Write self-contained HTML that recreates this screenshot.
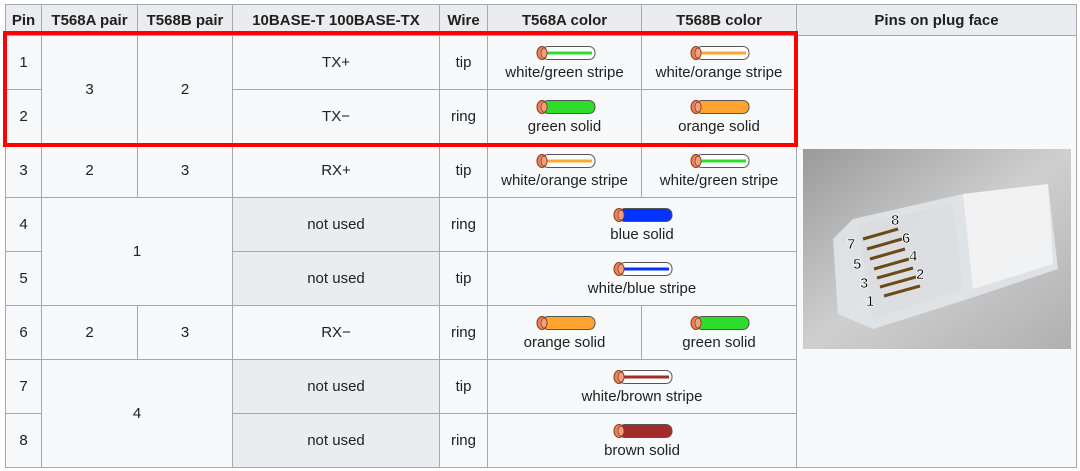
<!DOCTYPE html>
<html><head><meta charset="utf-8"><style>
body{margin:0;background:#fff;width:1080px;height:471px;overflow:hidden;font-family:"Liberation Sans","DejaVu Sans",sans-serif;font-size:15px;color:#202122}
table{position:absolute;left:5px;top:4px;border-collapse:collapse;table-layout:fixed;background:#f8f9fa}
td,th{border:1px solid #a2a9b1;text-align:center;padding:0;vertical-align:middle}
th{background:#eaecf0;height:30px;font-weight:bold}
td{height:53px}
.nu{background:#eaecf0}
.w{display:block;margin:0 auto 3px}
.box{position:absolute;left:3px;top:31px;width:787px;height:108px;border:4px solid #f00}
</style></head><body>
<svg width="0" height="0" style="position:absolute"><defs>
<g id="end"><ellipse cx="8" cy="8" rx="5" ry="6.5" fill="#e8845c" stroke="#8a3a1a"/><ellipse cx="10" cy="8" rx="3" ry="5" fill="#f0a080" stroke="#8a3a1a" stroke-width=".7"/></g>
</defs></svg>
<table>
<colgroup><col style="width:36px"><col style="width:96px"><col style="width:95px"><col style="width:207px"><col style="width:48px"><col style="width:154px"><col style="width:155px"><col style="width:280px"></colgroup>
<tr><th>Pin</th><th>T568A pair</th><th>T568B pair</th><th>10BASE-T 100BASE-TX</th><th>Wire</th><th>T568A color</th><th>T568B color</th><th>Pins on plug face</th></tr>
<tr><td>1</td><td rowspan="2">3</td><td rowspan="2">2</td><td>TX+</td><td>tip</td>
<td><svg class="w" width="62" height="16"><rect x="8" y="1.5" width="53" height="13" rx="6" fill="#fff" stroke="#555"/><rect x="12" y="6.5" width="46" height="3" fill="#2ddc2d"/><use href="#end"/></svg>white/green stripe</td>
<td><svg class="w" width="62" height="16"><rect x="8" y="1.5" width="53" height="13" rx="6" fill="#fff" stroke="#555"/><rect x="12" y="6.5" width="46" height="3" fill="#ffa530"/><use href="#end"/></svg>white/orange stripe</td>
<td rowspan="2" style="border-bottom:none"></td></tr>
<tr><td>2</td><td>TX−</td><td>ring</td>
<td><svg class="w" width="62" height="16"><rect x="8" y="1.5" width="53" height="13" rx="6" fill="#2ddc2d" stroke="#555"/><use href="#end"/></svg>green solid</td>
<td><svg class="w" width="62" height="16"><rect x="8" y="1.5" width="53" height="13" rx="6" fill="#ffa530" stroke="#555"/><use href="#end"/></svg>orange solid</td></tr>
<tr><td>3</td><td>2</td><td>3</td><td>RX+</td><td>tip</td>
<td><svg class="w" width="62" height="16"><rect x="8" y="1.5" width="53" height="13" rx="6" fill="#fff" stroke="#555"/><rect x="12" y="6.5" width="46" height="3" fill="#ffa530"/><use href="#end"/></svg>white/orange stripe</td>
<td><svg class="w" width="62" height="16"><rect x="8" y="1.5" width="53" height="13" rx="6" fill="#fff" stroke="#555"/><rect x="12" y="6.5" width="46" height="3" fill="#2ddc2d"/><use href="#end"/></svg>white/green stripe</td>
<td rowspan="6" style="border-top:none;vertical-align:top"><svg width="268" height="200" style="display:block;margin:5px auto 0">
<defs><linearGradient id="bg" x1="0" y1="0" x2="1" y2="1"><stop offset="0" stop-color="#9a9a9a"/><stop offset=".5" stop-color="#cfcfcf"/><stop offset="1" stop-color="#b0b0b0"/></linearGradient></defs>
<rect width="268" height="200" fill="url(#bg)"/>
<path d="M30 90 L50 70 L160 45 L245 35 L255 120 L165 150 L70 180 L35 165 Z" fill="#e2e5e8" opacity=".9"/>
<path d="M160 45 L245 35 L250 115 L170 140 Z" fill="#f4f5f6" opacity=".85"/>
<path d="M55 75 L150 55 L160 140 L70 170 Z" fill="#d8dbde" opacity=".6"/>
<g stroke="#6b4a18" stroke-width="3"><line x1="60" y1="90" x2="95" y2="80"/><line x1="64" y1="100" x2="99" y2="90"/><line x1="67" y1="110" x2="102" y2="100"/><line x1="71" y1="120" x2="106" y2="110"/><line x1="74" y1="129" x2="110" y2="119"/><line x1="77" y1="138" x2="113" y2="128"/><line x1="81" y1="147" x2="117" y2="137"/></g>
<g font-weight="bold" font-size="15" fill="#000" stroke="#fff" stroke-width=".8"><text x="88" y="76">8</text><text x="44" y="100">7</text><text x="99" y="94">6</text><text x="50" y="120">5</text><text x="106" y="112">4</text><text x="57" y="139">3</text><text x="113" y="130">2</text><text x="63" y="157">1</text></g>
</svg></td></tr>
<tr><td>4</td><td rowspan="2" colspan="2">1</td><td class="nu">not used</td><td>ring</td>
<td colspan="2"><svg class="w" width="62" height="16"><rect x="8" y="1.5" width="53" height="13" rx="6" fill="#0033ff" stroke="#555"/><use href="#end"/></svg>blue solid</td></tr>
<tr><td>5</td><td class="nu">not used</td><td>tip</td>
<td colspan="2"><svg class="w" width="62" height="16"><rect x="8" y="1.5" width="53" height="13" rx="6" fill="#fff" stroke="#555"/><rect x="12" y="6.5" width="46" height="3" fill="#0033ff"/><use href="#end"/></svg>white/blue stripe</td></tr>
<tr><td>6</td><td>2</td><td>3</td><td>RX−</td><td>ring</td>
<td><svg class="w" width="62" height="16"><rect x="8" y="1.5" width="53" height="13" rx="6" fill="#ffa530" stroke="#555"/><use href="#end"/></svg>orange solid</td>
<td><svg class="w" width="62" height="16"><rect x="8" y="1.5" width="53" height="13" rx="6" fill="#2ddc2d" stroke="#555"/><use href="#end"/></svg>green solid</td></tr>
<tr><td>7</td><td rowspan="2" colspan="2">4</td><td class="nu">not used</td><td>tip</td>
<td colspan="2"><svg class="w" width="62" height="16"><rect x="8" y="1.5" width="53" height="13" rx="6" fill="#fff" stroke="#555"/><rect x="12" y="6.5" width="46" height="3" fill="#a52a2a"/><use href="#end"/></svg>white/brown stripe</td></tr>
<tr><td>8</td><td class="nu">not used</td><td>ring</td>
<td colspan="2"><svg class="w" width="62" height="16"><rect x="8" y="1.5" width="53" height="13" rx="6" fill="#a52a2a" stroke="#555"/><use href="#end"/></svg>brown solid</td></tr>
</table>
<div class="box"></div>
</body></html>
